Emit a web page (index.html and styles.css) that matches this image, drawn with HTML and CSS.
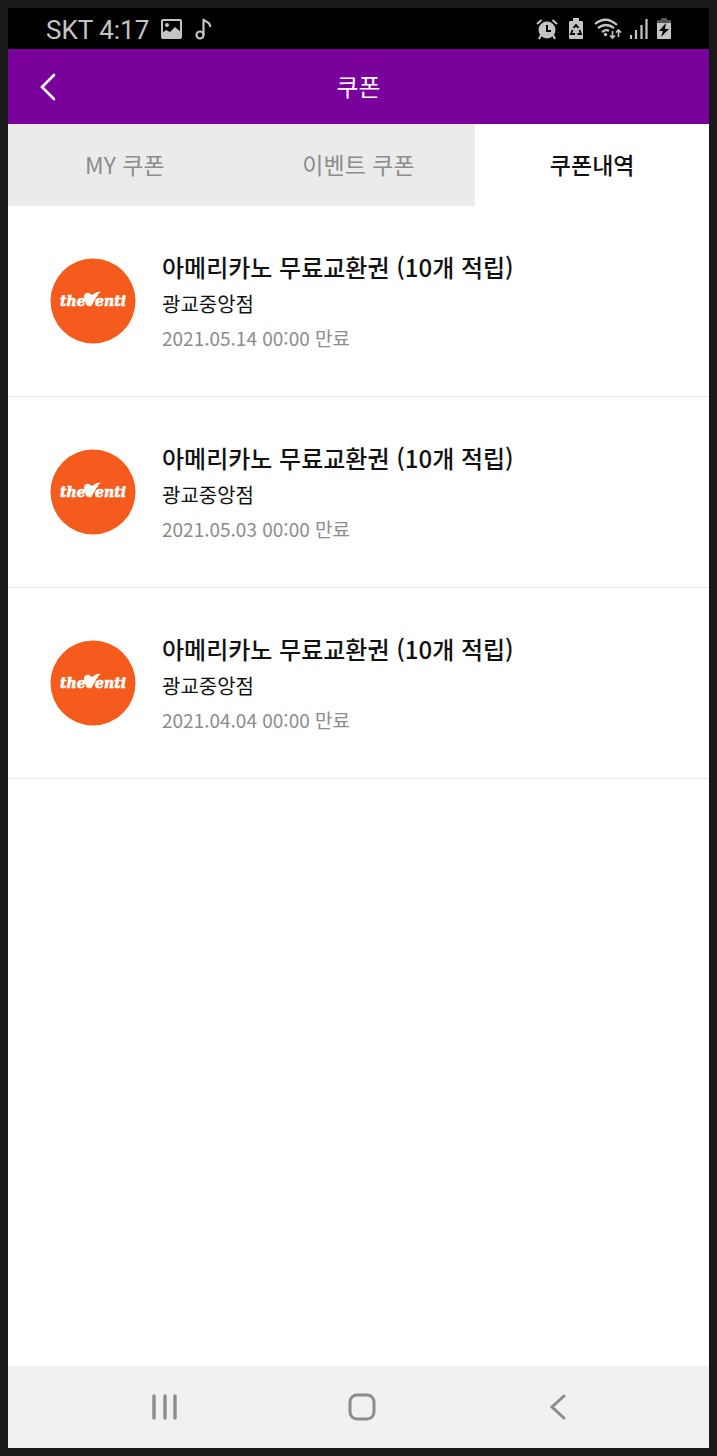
FILE: index.html
```html
<!DOCTYPE html>
<html lang="ko">
<head>
<meta charset="utf-8">
<meta name="viewport" content="width=device-width, initial-scale=1">
<title>쿠폰</title>
<link rel="stylesheet" href="styles.css">
</head>
<body>
<div class="screen">
  <div class="status">
    <div class="status-side">
      <span class="clock">SKT 4:17</span>
      <svg width="21" height="20" viewBox="0 0 21 20"><rect x="1" y="1" width="19" height="18" rx="1" fill="none" stroke="currentColor" stroke-width="2"/><circle cx="6" cy="6" r="2" fill="currentColor"/><path d="M1 14l4-3 4 2 5-5 6 5v6H1z" fill="currentColor"/></svg>
      <svg width="18" height="22" viewBox="-1 0 18 22" fill="none" stroke="currentColor" stroke-width="2.200"><circle cx="5" cy="17" r="3.500"/><path d="M8.500 17V1C9.500 4.500 16 3 15 9"/></svg>
    </div>
    <div class="status-side icons">
      <svg width="22" height="22" viewBox="0 0 22 22"><circle cx="11" cy="12" r="8.500" fill="currentColor"/><path d="M1 6l4.500-4M21 6l-4.500-4M5 17l-2 4M17 17l2 4" stroke="currentColor" stroke-width="2"/><path d="M11 7v6h4" fill="none" stroke="#000" stroke-width="2"/></svg>
      <svg width="18" height="22" viewBox="-2 0 18 22"><path d="M5 0h6v3h3q1 0 1 1v16q0 1-1 1H2q-1 0-1-1V4q0-1 1-1h3z" fill="currentColor"/><path d="M5.500 10L8 7l2.500 3M11.500 12l1.500 4H9.500M7 16H3l1.500-4" fill="none" stroke="#000" stroke-width="1.800"/></svg>
      <svg width="30" height="22" viewBox="-2 0 30 22" fill="none" stroke="currentColor" stroke-width="2.200"><path d="M1 6q11-9 22 1M4 10q8-6 16 0M8 14q4-3 7-1"/><circle cx="11.500" cy="16.500" r="1.700" fill="currentColor" stroke="none"/><path d="M18.500 13v7M16 17.500l2.500 2.500 2.500-2.500M24.500 19v-7M22 14.500l2.500-2.500 2.500 2.500" stroke-width="1.700"/></svg>
      <svg width="18" height="22" viewBox="2 0 18 22" stroke="currentColor" stroke-width="2.200"><path d="M3 17v4M8 12v9M13.500 7v14M18.500 1v20"/></svg>
      <svg width="16" height="22" viewBox="0 0 16 22"><path d="M5 0h6v2h4v3H1V2h4z" fill="#555"/><path d="M1 5h14v15q0 1-1 1H2q-1 0-1-1z" fill="currentColor"/><path d="M10 5l-7 8h4l-2 6 8-8H9z" fill="#000"/></svg>
    </div>
  </div>
  <header class="header">
    <button class="back" type="button" aria-label="뒤로"><svg width="18" height="28" viewBox="0 0 18 28"><path d="M15 2L3 14l12 12" fill="none" stroke="currentColor" stroke-width="2.600" stroke-linecap="round"/></svg></button>
    <h1 class="title">쿠폰</h1>
  </header>
  <nav class="tabs">
    <a class="tab" href="#my">MY 쿠폰</a>
    <a class="tab" href="#event">이벤트 쿠폰</a>
    <a class="tab active" href="#history" aria-current="page">쿠폰내역</a>
  </nav>
  <main class="content">
    <ul class="coupons">
      <li class="coupon">
        <svg class="logo" viewBox="0 0 86 86"><circle cx="43" cy="43" r="42.500" fill="#f55b1c"/><text class="logo-text" x="43" y="48">theVenti</text><path class="swoosh" d="M34 38c1-4 6-4 7-1 3 0 4-4 10-3-4 2-5 6-8 10-3 4-6 5-7 2-1-2-2-5-2-8z"/></svg>
        <div class="info"><h2 class="name">아메리카노 무료교환권 (10개 적립)</h2><p class="shop">광교중앙점</p><p class="date">2021.05.14 00:00 만료</p></div>
      </li>
      <li class="coupon">
        <svg class="logo" viewBox="0 0 86 86"><circle cx="43" cy="43" r="42.500" fill="#f55b1c"/><text class="logo-text" x="43" y="48">theVenti</text><path class="swoosh" d="M34 38c1-4 6-4 7-1 3 0 4-4 10-3-4 2-5 6-8 10-3 4-6 5-7 2-1-2-2-5-2-8z"/></svg>
        <div class="info"><h2 class="name">아메리카노 무료교환권 (10개 적립)</h2><p class="shop">광교중앙점</p><p class="date">2021.05.03 00:00 만료</p></div>
      </li>
      <li class="coupon">
        <svg class="logo" viewBox="0 0 86 86"><circle cx="43" cy="43" r="42.500" fill="#f55b1c"/><text class="logo-text" x="43" y="48">theVenti</text><path class="swoosh" d="M34 38c1-4 6-4 7-1 3 0 4-4 10-3-4 2-5 6-8 10-3 4-6 5-7 2-1-2-2-5-2-8z"/></svg>
        <div class="info"><h2 class="name">아메리카노 무료교환권 (10개 적립)</h2><p class="shop">광교중앙점</p><p class="date">2021.04.04 00:00 만료</p></div>
      </li>
    </ul>
  </main>
  <footer class="navbar">
    <button type="button" aria-label="최근 앱"><svg width="28" height="28" viewBox="0 0 28 28"><path d="M3 3v22M14 3v22M24 3v22" stroke="currentColor" stroke-width="3.400" stroke-linecap="round"/></svg></button>
    <button type="button" aria-label="홈"><svg width="28" height="28" viewBox="0 0 28 28"><rect x="2" y="2" width="24" height="24" rx="7" fill="none" stroke="currentColor" stroke-width="3"/></svg></button>
    <button type="button" aria-label="뒤로"><svg width="28" height="28" viewBox="0 0 28 28"><path d="M20 3L8 14l12 11" fill="none" stroke="currentColor" stroke-width="3" stroke-linecap="round"/></svg></button>
  </footer>
</div>
</body>
</html>
```
FILE: styles.css
```css
* { box-sizing: border-box; }
body {
  margin: 0;
  background: #191919;
  color: #111;
  font-family: "Noto Sans CJK KR", sans-serif;
}
button { border: 0; padding: 0; background: none; color: inherit; font: inherit; }
svg { display: block; flex: none; }
.screen {
  display: flex;
  flex-direction: column;
  min-height: 100vh;
  border: 8px solid #191919;
  background: #fff;
}
.status {
  display: flex;
  justify-content: space-between;
  align-items: center;
  height: 41px;
  padding: 0 37px 0 38px;
  background: #000;
  color: #c4c4c4;
}
.status-side { display: flex; align-items: center; gap: 12px; }
.icons { gap: 8px; }
.clock { padding-top: 2px; font: 26px/38px Roboto, sans-serif; }
.header {
  display: grid;
  grid-template-columns: 80px 1fr 80px;
  align-items: center;
  height: 75px;
  background: #7a009c;
  color: #fff;
}
.back { display: flex; padding-left: 31px; }
.title { margin: 0; padding-bottom: 2px; font-size: 24px; line-height: 36px; font-weight: 400; text-align: center; }
.tabs { display: grid; grid-template-columns: repeat(3, 1fr); height: 82px; background: #ebebeb; }
.tab {
  display: flex;
  align-items: center;
  justify-content: center;
  padding-bottom: 2px;
  color: #8c8c8c;
  font-size: 23px;
  line-height: 34px;
  text-decoration: none;
}
.active { background: #fff; color: #111; font-weight: 500; }
.content { flex: 1; }
.coupons { margin: 0; padding: 0; list-style: none; }
.coupon {
  display: flex;
  align-items: center;
  gap: 26px;
  padding: 41px 42px;
  border-bottom: 1px solid #e8e8e8;
}
.logo { width: 86px; height: 86px; }
.logo-text {
  fill: #fff;
  stroke: #fff;
  stroke-width: 0.6;
  font: italic bold 14px "DejaVu Serif", serif;
  text-anchor: middle;
}
.swoosh { fill: #fff; }
.info { flex: 1; }
.name, .shop, .date { margin: 0; line-height: 34px; font-weight: 400; }
.name { font-size: 24px; line-height: 40px; font-weight: 500; }
.shop { font-size: 20px; }
.date { color: #8c8c8c; font-size: 19px; }
.navbar {
  display: flex;
  justify-content: space-between;
  align-items: center;
  height: 82px;
  padding: 0 137px 0 143px;
  background: #f1f1f1;
  color: #8c8c8c;
}
```
